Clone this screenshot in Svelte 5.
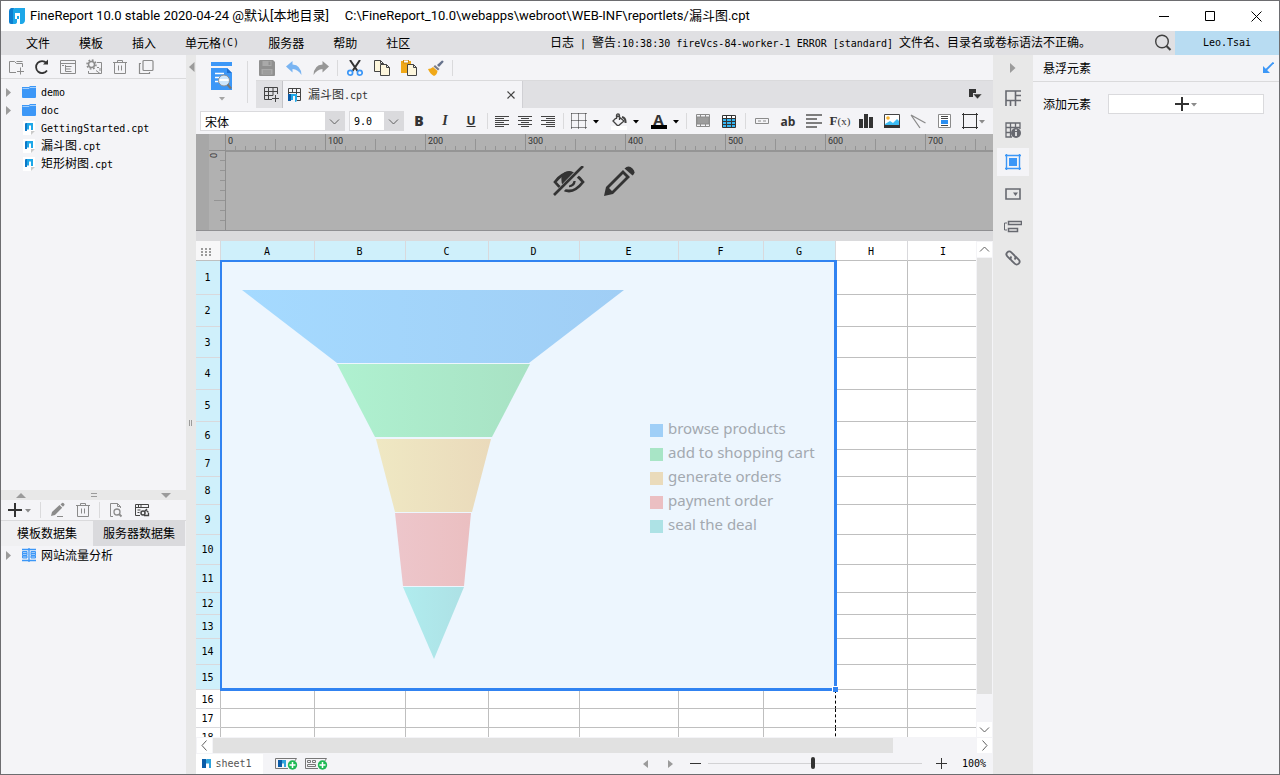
<script>
  const menus = [
    { t: '文件' }, { t: '模板' }, { t: '插入' }, { t: '单元格', k: '(C)' },
    { t: '服务器' }, { t: '帮助' }, { t: '社区' }
  ];
  const cols = [
    ['A', 94], ['B', 91], ['C', 83], ['D', 91], ['E', 99], ['F', 85], ['G', 72], ['H', 72], ['I', 72]
  ];
  const rows = [34, 32, 31, 32, 32, 28, 27, 28, 30, 30, 28, 22, 24, 26, 25, 19, 19, 19];
  const ruler = [0, 100, 200, 300, 400, 500, 600, 700];
  const tree = [
    { folder: true, en: 'demo' },
    { folder: true, en: 'doc' },
    { en: 'GettingStarted.cpt' },
    { zh: '漏斗图', en: '.cpt' },
    { zh: '矩形树图', en: '.cpt' }
  ];
  const slices = [
    { name: 'browse products', pts: '22,29 404,29 309,102 117,102', a: '#a5daff', b: '#a0cef5', key: '#a0cff7' },
    { name: 'add to shopping cart', pts: '117,103 310,103 272,176 155,176', a: '#aff1d0', b: '#a8e2c4', key: '#a8e5c6' },
    { name: 'generate orders', pts: '156,178 271,178 252,251 175,251', a: '#efe8c3', b: '#eadabb', key: '#eadbbb' },
    { name: 'payment order', pts: '175,252 251,252 244,325 183,325', a: '#edc6cb', b: '#ebbfc1', key: '#ebbfc2' },
    { name: 'seal the deal', pts: '183,326 244,326 214,398', a: '#b0ecee', b: '#ade1e5', key: '#ade2e5' }
  ];
  let zoom = $state(49);
  let font = $state('宋体');
  let size = $state('9.0');
</script>

{#snippet logo(s)}
  <svg width={s} height={s} viewBox="0 0 16 16" aria-hidden="true">
    <path d="M0 3q0-2 2-3h3v6H4v10H2q-2 0-2-2z" fill="#0d7fd0" />
    <path d="M4 2q0-2 2-2h10v12q0 3-3 4h-2V5H8v3h2v3H8v3q0 2-3 2H4z" fill="#1da7e8" />
    <path d="M6 5h4v3H8v3H6z" fill="#fff" />
  </svg>
{/snippet}

{#snippet caret(c)}
  <svg width="8" height="5" viewBox="0 0 8 5" aria-hidden="true"><path d="M1 1h6L4 4.500z" fill={c} /></svg>
{/snippet}

{#snippet trash()}
  <svg width="16" height="16" viewBox="0 0 16 16" fill="none" stroke="#8b8b8b" aria-hidden="true">
    <path d="M1 3.500h14M5.500 3V1.500h5V3M2.500 4v10.500h11V4M6.500 6.500v5M9.500 6.500v5" />
  </svg>
{/snippet}

{#snippet chevron(d)}
  <svg width="11" height="11" viewBox="0 0 11 11" fill="none" stroke="#606060" aria-hidden="true"><path {d} /></svg>
{/snippet}

<div class="window">
  <header class="title">
    {@render logo(16)}
    <span class="app-name">FineReport 10.0 stable 2020-04-24 @默认[本地目录]</span>
    <span class="path">C:\FineReport_10.0\webapps\webroot\WEB-INF\reportlets/漏斗图.cpt</span>
    <div class="win-buttons">
      <button aria-label="Minimize"><svg width="11" height="11" stroke="#000"><path d="M0 5.500h10" /></svg></button>
      <button aria-label="Maximize"><svg width="11" height="11" stroke="#000" fill="none"><path d="M.5 .5h9v9h-9z" /></svg></button>
      <button aria-label="Close"><svg width="11" height="11" stroke="#000"><path d="M.5 .5l10 10M10.500 .5l-10 10" /></svg></button>
    </div>
  </header>

  <nav class="menubar">
    <div class="menus">
      {#each menus as m}
        <button>{m.t}{#if m.k}<span class="mono">{m.k}</span>{/if}</button>
      {/each}
    </div>
    <p class="log">日志<span class="mono">&nbsp;|&nbsp;</span>警告<span class="mono">:10:38:30 fireVcs-84-worker-1 ERROR [standard]&nbsp;</span>文件名、目录名或卷标语法不正确。</p>
    <button class="search" aria-label="Search">
      <svg width="18" height="18" viewBox="0 0 18 18" fill="none" stroke="#404040"><circle cx="8" cy="7.500" r="6.300" stroke-width="1.400" /><path d="M12.500 12l4 4" stroke-width="2.200" /></svg>
    </button>
    <button class="user mono">Leo.Tsai</button>
  </nav>

  <div class="body">
    <aside class="left">
      <section class="files">
        <div class="bar">
          <button aria-label="New folder"><svg width="16" height="16" viewBox="0 0 16 16" fill="none" stroke="#8b8b8b"><path d="M8 13.500H1.500v-11h5l2 2h6V8M8.500 2.500h6M12.500 8.500v7M9 12.500h7" /></svg></button>
          <button aria-label="Refresh"><svg width="16" height="16" viewBox="0 0 16 16" fill="none" stroke="#333" stroke-width="1.800"><path d="M13 11.500A6 6 0 1 1 12.500 4" /><path d="M9 5.500h5V.5z" fill="#333" stroke="none" /></svg></button>
          <button aria-label="Open location"><svg width="16" height="16" viewBox="0 0 16 16" fill="none" stroke="#8b8b8b"><path d="M.5 1.500h15v13H.5zM0 4.500h16M5.500 6v6.500M5.500 7.500h6M5.500 10h5M5.500 12.500h6M2 6.500h2" /></svg></button>
          <button aria-label="Rename"><svg width="16" height="16" viewBox="0 0 16 16" fill="none" stroke="#8b8b8b"><circle cx="5.500" cy="5.500" r="3" stroke-width="1.500" /><circle cx="5.500" cy="5.500" r="4.500" stroke-width="1.500" stroke-dasharray="1.800 1.700" /><path d="M11 3.500h4.500v11H2.500V12M10 11.500l4 3M14 9v3M11 8.500h2" /></svg></button>
          <button aria-label="Delete">{@render trash()}</button>
          <button aria-label="Copy"><svg width="16" height="16" viewBox="0 0 16 16" fill="none" stroke="#8b8b8b" stroke-width="1.200"><rect x="5" y="1.500" width="10" height="10" rx="1" /><path d="M3 4.500H1.500v10h10V13" /></svg></button>
        </div>
        <ul class="tree">
          {#each tree as n}
            <li>
              <span class="twist">{#if n.folder}<svg width="6" height="9"><path d="M0 0l5 4.500L0 9z" fill="#9b9b9b" /></svg>{/if}</span>
              {#if n.folder}
                <svg class="node" width="16" height="14" viewBox="0 0 16 14"><path d="M1 2h7l1-1h6v11q0 1-1 1H2q-1 0-1-1z" fill="#3c97f7" /><path d="M1.500 3.500H8l1-1h6" stroke="#a4d0fc" fill="none" /></svg>
              {:else}
                <svg class="node" width="16" height="15" viewBox="0 0 16 15"><path d="M2 0h12v10l-4 4H2z" fill="#fff" /><path d="M10 14v-4h4z" fill="#c9c9c9" /><path d="M4 3q0-1 1-1h1v8H4z" fill="#0d78c8" /><path d="M6 2h6v7h-2V4.500H8v4H6z" fill="#1da7e8" /></svg>
              {/if}
              <span>{n.zh ?? ''}<span class="mono">{n.en}</span></span>
            </li>
          {/each}
        </ul>
      </section>

      <div class="hsplit">
        <svg width="10" height="5"><path d="M0 5L5 0l5 5z" fill="#9b9b9b" /></svg>
        <svg width="6" height="4" stroke="#9b9b9b"><path d="M0 .5h6M0 3.500h6" /></svg>
        <svg width="10" height="5"><path d="M0 0h10L5 5z" fill="#9b9b9b" /></svg>
      </div>

      <section class="datasets">
        <div class="bar">
          <button class="wide" aria-label="Add dataset"><svg width="14" height="14" stroke="#333" stroke-width="2"><path d="M7 0v14M0 7h14" /></svg>{@render caret('#8b8b8b')}</button>
          <i class="sep"></i>
          <button aria-label="Edit"><svg width="16" height="16" viewBox="0 0 16 16"><path d="M2 14l1-4 7.500-7 2.700 2.700L6 13zM11.500 2.500L13 1q1-.7 2 .5t.3 1.800L14 4.800z" fill="#8b8b8b" /><path d="M8 14.500h6" stroke="#8b8b8b" /></svg></button>
          <button aria-label="Delete dataset">{@render trash()}</button>
          <i class="sep"></i>
          <button aria-label="Preview dataset"><svg width="16" height="16" viewBox="0 0 16 16" fill="none" stroke="#8b8b8b"><path d="M5 14.500H2.500v-13h7l3 3V6M9.500 1.500v3h3" /><circle cx="9" cy="10" r="3" stroke-width="1.300" /><path d="M11 12l2.500 2.500" stroke-width="1.800" /></svg></button>
          <button aria-label="Connection settings"><svg width="16" height="16" viewBox="0 0 16 16" fill="none" stroke="#444"><path d="M6 13.500H1.500v-11h13V6M1 5.500h14M4.500 3v2M7 3v2M3.500 8h3M3.500 10.500h2" /><circle cx="9" cy="11" r="2" stroke-width="1.500" /><path d="M10.500 9.500L13 7M12 8l2.500 2.500M10 13.500h4.500V11" stroke-width="1.300" /></svg></button>
        </div>
        <div class="tabs">
          <button>模板数据集</button>
          <button class="on">服务器数据集</button>
        </div>
        <ul class="tree">
          <li>
            <span class="twist"><svg width="6" height="9"><path d="M0 0l5 4.500L0 9z" fill="#9b9b9b" /></svg></span>
            <svg class="node" width="16" height="14" viewBox="0 0 16 14" fill="none" stroke="#3c97f7"><path d="M1 1.500h14M1 12.500h14M8 0v14" stroke-width="1.300" /><path d="M1.500 3.500h4.500v2H1.500zM1.500 5.500h4.500v2H1.500zM1.500 8h4.500v2H1.500zM10 3.500h4.500v2H10zM10 5.500h4.500v2H10zM10 8h4.500v2H10z" fill="#9fcbf9" /></svg>
            <span>网站流量分析</span>
          </li>
        </ul>
      </section>
    </aside>

    <div class="vsplit">
      <svg width="6" height="10"><path d="M5.500 0v10L0 5z" fill="#9b9b9b" /></svg>
      <span class="grip"></span>
    </div>

    <main class="main">
      <div class="top">
        <button class="preview" aria-label="Preview">
          <svg width="22" height="30" viewBox="0 0 22 30"><path d="M0 1h21v4H0z" fill="#3c97f7" /><path d="M0 7h16l5 5v17H0z" fill="#3c97f7" /><path d="M16 7v5h5z" fill="#1f6fd0" /><path d="M4 12.500h9M4 16.500h5M4 20.500h4" stroke="#fff" stroke-width="1.600" /><circle cx="13" cy="19.500" r="5.500" fill="#cfe6fb" stroke="#8f8f8f" /><path d="M8.500 18h9v2h-9z" fill="#fff" /><path d="M16.500 23.500l3.500 4" stroke="#777" stroke-width="2.200" /></svg>
          {@render caret('#a5a5a5')}
        </button>
        <div class="top-right">
          <div class="actions">
            <button aria-label="Save"><svg width="16" height="16" viewBox="0 0 16 16"><path d="M1 0h13l2 2v13q0 1-1 1H1q-1 0-1-1V1q0-1 1-1z" fill="#909090" /><path d="M3.500 1h9v5h-9zM2.500 9h11v5.500h-11z" fill="#a9a9a9" /><path d="M9.500 1.500h2v3.500h-2z" fill="#909090" /><path d="M4 11h8M4 13h8" stroke="#909090" /></svg></button>
            <button aria-label="Undo"><svg width="16" height="16" viewBox="0 0 16 16"><path d="M0 6.500L6.500 1v3.500Q15 5 15.500 15 12 9.500 6.500 9v3.500z" fill="#79b4f2" /></svg></button>
            <button aria-label="Redo"><svg width="16" height="16" viewBox="0 0 16 16"><path d="M16 6.500L9.500 1v3.500Q1 5 .5 15 4 9.500 9.500 9v3.500z" fill="#979797" /></svg></button>
            <i class="sep"></i>
            <button aria-label="Cut"><svg width="16" height="16" viewBox="0 0 16 16" fill="none"><path d="M3 0l7.500 11M13 0L5.500 11" stroke="#333" stroke-width="2" /><circle cx="3.200" cy="12.700" r="2.400" stroke="#3c97f7" stroke-width="1.700" /><circle cx="12.800" cy="12.700" r="2.400" stroke="#3c97f7" stroke-width="1.700" /></svg></button>
            <button aria-label="Copy cells"><svg width="16" height="16" viewBox="0 0 16 16" stroke="#444"><path d="M.5 .5h6l3 3v8h-9zM6.500 .5v3h3" fill="#fdf6dd" /><path d="M6.500 4.500h6l3 3v8h-9zM12.500 4.500v3h3" fill="#fdf6dd" /></svg></button>
            <button aria-label="Paste"><svg width="16" height="16" viewBox="0 0 16 16"><path d="M0 1h10v12H0z" fill="#f0a818" /><path d="M2.500 0h5v3h-5z" fill="#fff" stroke="#d08c10" /><path d="M6.500 4.500h6l3 3v8h-9zM12.500 4.500v3h3" fill="#fdf6dd" stroke="#444" /></svg></button>
            <button aria-label="Format painter"><svg width="16" height="16" viewBox="0 0 16 16"><path d="M14 .5q2 0 1.500 1.500L11 7 9 5z" fill="#66728c" /><path d="M7 5l4.500 4L10 10.500 5.500 6.500z" fill="#7e7e86" /><path d="M5 7l4.500 4Q9 15 6 16 2 14 0 9q3 0 5-2z" fill="#f0a818" /></svg></button>
            <i class="sep"></i>
          </div>
          <div class="doctabs">
            <button class="newtab" aria-label="New template"><svg width="15" height="15" viewBox="0 0 15 15" fill="none" stroke="#444"><path d="M8 12.500H.5V.5h13V7M.5 4.500h13M.5 8.500H9M4.500 .5v12M9 .5v8M11.500 8v7M8 11.500h7" /></svg></button>
            <div class="doctab">
              <svg width="14" height="14" viewBox="0 0 14 14" fill="none" stroke="#444"><path d="M.5 6V.5h12v12H9M0 4.500h13M4.500 0v5M8.500 0v12M9 8.500h4" /><path d="M0 6h3v7H0z" fill="#0b5ca8" stroke="none" /><path d="M3 6h6v6q0 2-2 2V8H5v4H3z" fill="#1da7e8" stroke="none" /></svg>
              <span>漏斗图<span class="mono">.cpt</span></span>
              <button aria-label="Close tab"><svg width="8" height="8" stroke="#444" stroke-width="1.200"><path d="M.5 .5l7 7M7.500 .5l-7 7" /></svg></button>
            </div>
            <button class="tablist" aria-label="All templates"><svg width="13" height="11"><path d="M0 0h7v4H4v4H0z" fill="#333" /><path d="M4 5h9L8.500 10z" fill="#333" stroke="#e0e0e3" stroke-width=".5" /></svg></button>
          </div>
        </div>
      </div>

      <div class="format">
        <div class="combo family">
          <select aria-label="Font" bind:value={font}><option>宋体</option><option>黑体</option></select>
          <span>{@render chevron('M1 3.500l4.500 4.500L10 3.500')}</span>
        </div>
        <div class="combo size">
          <select class="mono" aria-label="Font size" bind:value={size}><option>9.0</option><option>10.0</option></select>
          <span>{@render chevron('M1 3.500l4.500 4.500L10 3.500')}</span>
        </div>
        <div class="group biu">
          <button aria-label="Bold"><b>B</b></button>
          <button aria-label="Italic"><em>I</em></button>
          <button aria-label="Underline"><u>U</u></button>
        </div>
        <i class="sep"></i>
        <div class="group aligns">
          <button aria-label="Align left"><svg width="15" height="13" stroke="#444"><path d="M0 1.500h14M0 3.500h9M0 5.500h14M0 7.500h9M0 9.500h14M0 11.500h9" /></svg></button>
          <button aria-label="Align center"><svg width="15" height="13" stroke="#444"><path d="M0 1.500h14M3 3.500h8M0 5.500h14M3 7.500h8M0 9.500h14M3 11.500h8" /></svg></button>
          <button aria-label="Align right"><svg width="15" height="13" stroke="#444"><path d="M0 1.500h14M5 3.500h9M0 5.500h14M5 7.500h9M0 9.500h14M5 11.500h9" /></svg></button>
        </div>
        <i class="sep"></i>
        <div class="group splits">
          <button aria-label="Borders"><svg width="16" height="16" fill="none" stroke="#222" stroke-dasharray="1 1"><path d="M.5 .5h15M.5 14.500h15M.5 7.500h15M.5 .5v15M7.500 .5v15M14.500 .5v15" /></svg>{@render caret('#000')}</button>
          <button aria-label="Fill color"><svg width="16" height="17" viewBox="0 0 16 17" fill="none" stroke="#444" stroke-width="1.300"><path d="M7 3l6 5-6 5-5-5zM5.500 6V2.500q0-1.500 1.500-1.500t1.500 1.500V7" /><path d="M11 4q4 1 3.500 6" stroke-width="2" /><path d="M0 13h16v4H0z" fill="#fff" stroke="none" /></svg>{@render caret('#000')}</button>
          <button aria-label="Font color"><span class="fc">A</span>{@render caret('#000')}</button>
        </div>
        <i class="sep"></i>
        <div class="group">
          <button aria-label="Merge cells"><svg width="14" height="14" viewBox="0 0 14 14" fill="none" stroke="#8b8b8b"><path d="M.5 .5h13v12H.5zM4.500 0v3M9.500 0v3M4.500 10v3M9.500 10v3" /><path d="M1 3h12v7H1z" fill="#9c9c9c" /></svg></button>
          <button aria-label="Split cells"><svg width="14" height="13" viewBox="0 0 14 13" stroke="#333"><path d="M.5 .5h13v12H.5z" fill="#fff" /><path d="M1 4h12v8H1z" fill="#35b5f2" stroke="none" /><path d="M.5 3.500h13M.5 6.500h13M.5 9.500h13M4.500 0v13M9.500 0v13" /></svg></button>
        </div>
        <i class="sep"></i>
        <div class="group">
          <button aria-label="Text field"><svg width="14" height="6" fill="none" stroke="#8b8b8b"><path d="M.5 .5h13v5H.5zM3 3h3M8 3h3" /></svg></button>
          <button class="ab">ab</button>
          <button aria-label="Rich text"><svg width="16" height="14" stroke="#555" stroke-width="1.500"><path d="M0 1h16M0 5h11M0 9h16M0 13h11" /></svg></button>
          <button class="fx">F<small>(x)</small></button>
          <button aria-label="Chart"><svg width="14" height="14" fill="#333"><path d="M0 5h4v9H0zM5 0h4v14H5zM10 3h4v11h-4z" /></svg></button>
          <button aria-label="Image"><svg width="16" height="14"><path d="M.5 .5h15v13H.5z" fill="#fff" stroke="#444" /><path d="M1 10l5-3 3 2 4-4 2 2v4H1z" fill="#3dbdf5" /><path d="M0 11h16v3H0z" fill="#333" /><circle cx="4" cy="4" r="1.800" fill="#f8b530" /></svg></button>
          <button aria-label="Slope line"><svg width="16" height="15" fill="none" stroke="#8b8b8b" stroke-width="1.300"><path d="M1 1l9 13M1 1l14.500 8" /></svg></button>
          <button aria-label="Sub report"><svg width="13" height="14" viewBox="0 0 13 14"><path d="M.5 .5h12v13H.5z" fill="#fff" stroke="#8b8b8b" /><path d="M3 2.500h7M3 4.500h7M3 11.500h7" stroke="#444" /><path d="M3 6h7v4H3z" fill="#2b8ef0" /></svg></button>
          <button class="float" aria-label="Float element"><svg width="16" height="16" fill="none" stroke="#333"><path d="M1.500 0v16M14.500 0v16M0 1.500h16M0 14.500h16" /></svg>{@render caret('#8b8b8b')}</button>
        </div>
      </div>

      <div class="canvas">
        <div class="gutter"></div>
        <div class="vruler"><span>0</span></div>
        <div class="area">
          <div class="ruler">
            {#each ruler as r}<span>{r}</span>{/each}
          </div>
          <div class="para">
            <button aria-label="Hide parameter panel"><svg width="32" height="30" viewBox="0 0 32 30" fill="none" stroke="#333"><path d="M2 16Q9 7 16 7t14 9q-7 9-14 9T2 16z" stroke-width="2.800" /><path d="M8.500 15a8 8 0 0 1 14-7L12 21q-3.500-2-3.500-6z" fill="#333" stroke="none" /><path d="M16 20q5 0 5.500-5" stroke-width="2.500" /><path d="M1 31L30 1" stroke="#b1b1b1" stroke-width="6" /><path d="M1 29L30 0" stroke-width="2.600" /></svg></button>
            <button aria-label="Edit parameter panel"><svg width="32" height="30" viewBox="0 0 32 30" fill="#333"><path fill-rule="evenodd" d="M1 30l2-9L20 4l7 7-17 17zM20 8L6 22l3 3L23 11z" /><path d="M21.500 2.500q4-4 8 0t0 7z" /></svg></button>
          </div>
        </div>
      </div>
      <div class="divider"></div>

      <div class="sheet">
        <div class="grid">
          <table>
            <colgroup>
              <col style="width:25px" />
              {#each cols as c}<col style="width:{c[1]}px" />{/each}
            </colgroup>
            <thead>
              <tr>
                <th class="corner"><svg width="11" height="9" fill="#9b9b9b"><path d="M0 0h2v2H0zM4 0h2v2H4zM8 0h2v2H8zM0 3h2v2H0zM4 3h2v2H4zM8 3h2v2H8zM0 6h2v2H0zM4 6h2v2H4zM8 6h2v2H8z" /></svg></th>
                {#each cols as c, i}<th class:sel={i < 7}>{c[0]}</th>{/each}
              </tr>
            </thead>
            <tbody>
              {#each rows as h, r}
                <tr style="height:{h}px">
                  <th class:sel={r < 15}>{r + 1}</th>
                  {#each cols as c, i}<td class:page={i === 6}></td>{/each}
                </tr>
              {/each}
            </tbody>
          </table>
          <figure class="chart">
            <svg class="funnel" width="426" height="400" viewBox="0 0 426 400" role="img" aria-label="Funnel">
              <defs>
                {#each slices as s, i}
                  <linearGradient id="g{i}"><stop offset="0" stop-color={s.a} /><stop offset="1" stop-color={s.b} /></linearGradient>
                {/each}
              </defs>
              {#each slices as s, i}<polygon points={s.pts} fill="url(#g{i})" />{/each}
            </svg>
            <ul class="legend">
              {#each slices as s}<li><i style="background:{s.key}"></i>{s.name}</li>{/each}
            </ul>
            <span class="handle"></span>
          </figure>
        </div>
        <div class="vscroll">
          <button aria-label="Scroll up">{@render chevron('M1 7.500L5.500 3 10 7.500')}</button>
          <div class="track"><span></span></div>
          <button aria-label="Scroll down">{@render chevron('M1 3.500l4.500 4.500L10 3.500')}</button>
        </div>
      </div>
      <div class="hscroll">
        <button aria-label="Scroll left">{@render chevron('M7.500 .5L3 5.500l4.500 5')}</button>
        <div class="track"><span></span></div>
        <button aria-label="Scroll right">{@render chevron('M3.500 .5L8 5.500l-4.500 5')}</button>
      </div>

      <footer class="status">
        <button class="sheettab"><svg width="9" height="9"><path d="M0 0h4v9H0z" fill="#0b5ca8" /><path d="M4 1q0-1 1-1h4v9H7V4.500H4z" fill="#2fa3dc" /></svg><span class="mono">sheet1</span></button>
        <button class="add" aria-label="Add sheet"><svg width="23" height="13" viewBox="0 0 23 13"><path d="M13 11.500H.5v-10h21l-2 3" fill="none" stroke="#777" /><path d="M3 3h4v7H3z" fill="#0b5ca8" /><path d="M7 3h4v7H9V6.500H7z" fill="#2fa3dc" /><circle cx="17.500" cy="8" r="4.700" fill="#1fb955" /><path d="M17.500 5v6M14.500 8h6" stroke="#fff" stroke-width="1.500" /></svg></button>
        <button class="add" aria-label="Add aggregate sheet"><svg width="23" height="13" viewBox="0 0 23 13"><path d="M13 11.500H.5v-10h21l-2 3M2.500 3.500h3v2h-3zM7.500 3.500h3v2h-3zM2.500 7.500h8v2h-8z" fill="none" stroke="#777" /><circle cx="17.500" cy="8" r="4.700" fill="#1fb955" /><path d="M17.500 5v6M14.500 8h6" stroke="#fff" stroke-width="1.500" /></svg></button>
        <div class="zoom">
          <button aria-label="Previous sheet"><svg width="5" height="8"><path d="M5 0v8L0 4z" fill="#9b9b9b" /></svg></button>
          <button aria-label="Next sheet"><svg width="5" height="8"><path d="M0 0v8l5-4z" fill="#9b9b9b" /></svg></button>
          <button aria-label="Zoom out"><svg width="11" height="11" stroke="#333"><path d="M0 5.500h11" /></svg></button>
          <input type="range" min="0" max="100" bind:value={zoom} aria-label="Zoom" />
          <button aria-label="Zoom in"><svg width="11" height="11" stroke="#333"><path d="M0 5.500h11M5.500 0v11" /></svg></button>
          <span class="mono">100%</span>
        </div>
      </footer>
    </main>

    <nav class="strip">
      <button aria-label="Collapse"><svg width="6" height="10"><path d="M0 0l5.500 5L0 10z" fill="#9b9b9b" /></svg></button>
      <button aria-label="Cell element"><svg width="16" height="16" viewBox="0 0 16 16" fill="none" stroke="#676970" stroke-width="1.600"><path d="M16 1H1v15M1 10.500h15M10.500 1v15M10.500 5.500H16M5.500 10.500V16" /></svg></button>
      <button aria-label="Cell attributes"><svg width="16" height="16" viewBox="0 0 16 16" fill="none" stroke="#676970" stroke-width="1.300"><path d="M7 15H1V1h14v6M1 5.500h14M1 10.500h5M5.500 1v14M10.500 1v5" /><circle cx="11" cy="11" r="5" fill="#676970" stroke="none" /><path d="M11 7.500v1.500M11 10v4" stroke="#fff" stroke-width="1.500" /></svg></button>
      <button class="on" aria-label="Float element panel"><svg width="16" height="16" viewBox="0 0 16 16" fill="none" stroke="#3c97f7" stroke-width="1.400"><path d="M1.500 0v16M14.500 0v16M0 1.500h16M0 14.500h16" /><path d="M4 4h8v8H4z" fill="#3c97f7" stroke="none" /></svg></button>
      <button aria-label="Widget settings"><svg width="16" height="12" fill="none" stroke="#676970" stroke-width="1.600"><path d="M1 1h14v10H1z" /><path d="M8 4.500h5L10.500 8z" fill="#676970" stroke="none" /></svg></button>
      <button aria-label="Condition attributes"><svg width="18" height="13" fill="none" stroke="#676970" stroke-width="1.500"><path d="M4.500 1.500h13v3h-13zM4.500 8.500h9v3h-9z" /><path d="M3 3H.5v7H3" stroke-width="1" /></svg></button>
      <button aria-label="Hyperlinks"><svg width="16" height="16" viewBox="0 0 16 16" fill="none" stroke="#676970" stroke-width="1.800"><path d="M5.500 9.500L2.300 6.300a2.700 2.700 0 0 1 4-4l3.200 3.200a2.700 2.700 0 0 1 0 4" /><path d="M10.500 6.500l3.200 3.200a2.700 2.700 0 0 1-4 4L6.500 10.500a2.700 2.700 0 0 1 0-4" /></svg></button>
    </nav>

    <aside class="right">
      <header><h2>悬浮元素</h2><button aria-label="Pop out"><svg width="12" height="12" fill="none" stroke="#3c97f7" stroke-width="1.800"><path d="M11.500 .5L3 9" /><path d="M1 4v7h7z" fill="#3c97f7" stroke="none" /></svg></button></header>
      <div class="row">
        <label for="add">添加元素</label>
        <button id="add"><svg width="14" height="14" stroke="#333" stroke-width="2"><path d="M7 0v14M0 7h14" /></svg>{@render caret('#8b8b8b')}</button>
      </div>
    </aside>
  </div>
</div>

<style>
  :global(body) { margin: 0; }
  .window {
    box-sizing: border-box; display: flex; flex-direction: column; height: 100vh;
    border: 1px solid #6d6d70; background: #f4f4f7; color: #000; overflow: hidden;
    font: 12px/18px "Noto Sans CJK SC", sans-serif;
  }
  .window :global(*) { box-sizing: border-box; }
  button { display: flex; align-items: center; justify-content: center; margin: 0; padding: 0; border: 0; background: none; color: inherit; font: inherit; white-space: nowrap; }
  svg { display: block; flex: none; }
  ul { margin: 0; padding: 0; list-style: none; }
  .mono { font-family: "DejaVu Sans Mono", monospace; font-size: 10px; }
  .sep { flex: none; width: 1px; height: 16px; margin: 0 3px; background: #dadadc; }

  .title { display: flex; align-items: center; flex: none; height: 30px; padding-left: 8px; background: #fff; font-family: Roboto, "Noto Sans CJK SC", sans-serif; font-size: 13px; white-space: nowrap; }
  .app-name { margin-left: 5px; }
  .path { margin-left: 16px; }
  .win-buttons { display: flex; margin-left: auto; }
  .win-buttons button { width: 46px; height: 30px; }

  .menubar { display: flex; align-items: center; flex: none; height: 24px; background: #e0e0e3; }
  .menus { display: flex; gap: 29px; padding-left: 25px; }
  .log { margin: 0 60px 0 auto; white-space: nowrap; }
  .search { width: 24px; height: 24px; }
  .user { width: 104px; height: 24px; background: #b8dcf2; }

  .body { display: flex; flex: 1; min-height: 0; }
  .left { display: flex; flex-direction: column; flex: none; width: 185px; }
  .files { flex: 435; min-height: 0; }
  .datasets { flex: 274; min-height: 0; }
  .bar { display: flex; align-items: center; height: 24px; padding-left: 2px; border-bottom: 1px solid #dadadc; }
  .bar button { width: 26px; height: 22px; }
  .bar .wide { width: 34px; gap: 2px; }
  .datasets .bar { height: 21px; }
  .tree { padding: 4px 0 0 5px; }
  .tree li { display: flex; align-items: center; height: 18px; white-space: nowrap; }
  .twist { width: 15px; }
  .node { margin-right: 4px; }
  .hsplit { display: flex; align-items: center; justify-content: space-between; flex: none; height: 10px; padding: 0 15px; background: #e8e8e8; }
  .tabs { display: flex; height: 25px; padding-right: 1px; background: #f0f0f2; }
  .tabs button { flex: 1; padding-bottom: 2px; }
  .tabs .on { background: #dadadd; }
  .datasets .tree { padding-top: 0; }

  .vsplit { display: flex; flex-direction: column; align-items: flex-start; flex: none; width: 10px; padding: 7px 0 0 3px; background: #e8e8e8; }
  .grip { width: 3px; height: 6px; margin: auto 0; border: solid #9b9b9b; border-width: 0 1px; }

  .main { display: flex; flex-direction: column; flex: 1; min-width: 0; }
  .top { display: flex; flex: none; height: 53px; }
  .preview { flex-direction: column; justify-content: flex-start; gap: 5px; width: 52px; height: 42px; margin: 6px 8px 0 0; border-right: 1px solid #dadadc; }
  .top-right { flex: 1; min-width: 0; }
  .actions { display: flex; align-items: center; height: 25px; margin-left: -3px; }
  .actions button { width: 27px; height: 24px; }
  .doctabs { display: flex; height: 28px; background: #e0e0e3; border-top: 1px solid #dadadc; }
  .newtab { width: 27px; padding-left: 4px; border-right: 1px solid #c4c4c8; }
  .doctab { display: flex; align-items: center; gap: 6px; width: 240px; padding: 0 7px 0 5px; background: #f4f4f7; border-right: 1px solid #d0d0d4; color: #333; }
  .doctab button { margin-left: auto; }
  .tablist { margin: 0 11px 0 auto; }

  .format { display: flex; align-items: center; flex: none; height: 26px; padding-left: 4px; }
  .format button { width: 26px; height: 22px; }
  .combo { display: flex; height: 20px; border: 1px solid #dadadd; background: #fff; }
  .combo select { flex: 1; min-width: 0; margin: 0; padding: 0 0 0 4px; border: 0; background: #fff; appearance: none; color: #000; font-size: 12px; font-family: "Noto Sans CJK SC", sans-serif; }
  .combo select.mono { font: 10px "DejaVu Sans Mono", monospace; }
  .combo span { display: flex; align-items: center; justify-content: center; width: 19px; background: #dadadd; }
  .family { width: 145px; margin-right: 4px; }
  .size { width: 55px; margin-right: 2px; }
  .group { display: flex; align-items: center; }
  .biu { font: 14px/16px "Open Sans", sans-serif; color: #333; }
  .biu b { font-weight: 800; }
  .biu em { font: italic bold 14px "Liberation Serif", serif; }
  .biu u { font-weight: 700; font-size: 12px; }
  .aligns button { width: 23px; }
  .splits { gap: 4px; }
  .splits button { width: 36px; gap: 5px; }
  .fc { width: 16px; height: 16px; border-bottom: 4px solid #000; color: #333; font: bold 15px/12px "Open Sans", sans-serif; text-align: center; }
  .ab { color: #333; font: bold 12px "Open Sans", sans-serif; }
  .fx { color: #333; font: bold 13px "Liberation Serif", serif; }
  .fx small { font-size: 11px; font-weight: 400; }
  .format .float { width: 34px; }

  .canvas { display: flex; flex: none; height: 97px; background: #b1b1b1; border-bottom: 1px solid #8f8f92; }
  .gutter { width: 13px; background: #a7a7a7; }
  .vruler { width: 16px; margin-top: 16px; padding-left: 1px; border-top: 1px solid #8f8f8f; background: repeating-linear-gradient(#0000 0 9px, #949494 9px 10px) right 0 top 0 / 5px 100% no-repeat, linear-gradient(#949494, #949494) right 0 top 49px / 11px 1px no-repeat; color: #333; font: 9px/9px Roboto, sans-serif; }
  .vruler span { display: block; width: 9px; height: 9px; text-align: center; transform: rotate(-90deg); }
  .area { flex: 1; min-width: 0; border-left: 1px solid #8f8f8f; overflow: hidden; }
  .ruler { display: flex; height: 18px; border-bottom: 2px solid #959595; }
  .ruler span { flex: none; width: 100px; padding: 2px 0 0 2px; border-left: 1px solid #8f8f8f; background: repeating-linear-gradient(90deg, #0000 0 9px, #949494 9px 10px) 0 12px / 99px 4px no-repeat, linear-gradient(#949494, #949494) 49px 5px / 1px 11px no-repeat; color: #333; font: 9px/10px Roboto, sans-serif; }
  .ruler span:first-child { width: 99px; border-left: 0; }
  .ruler span:last-child { flex: 1; min-width: 0; }
  .para { display: flex; justify-content: center; gap: 18px; padding: 14px 31px 0 0; }
  .divider { flex: none; height: 10px; background: #dadadc; }

  .sheet { display: flex; flex: 1; min-height: 0; }
  .grid { position: relative; flex: 1; min-width: 0; overflow: hidden; background: #fff; }
  table { width: 0; border-collapse: separate; border-spacing: 0; table-layout: fixed; }
  th, td { padding: 0; border: solid #bfbfbf; border-width: 0 1px 1px 0; }
  th { padding: 1px 1px 0 0; border-color: #d9d9dc; background: #fff; font: 10px/10px "DejaVu Sans Mono", monospace; }
  tbody th { border-right-color: #bfbfbf; }
  thead th { height: 20px; padding-top: 3px; border-bottom-color: #bfbfbf; }
  th.sel { background: #cff0fb; border-color: #d9d9dc; }
  .corner { background: #f7f7f8; }
  .corner svg { margin: 0 auto 0 5px; }
  .page { border-right: 1px dashed #000; }
  .chart { position: absolute; left: 24px; top: 19px; display: flex; width: 617px; height: 431px; margin: 0; border: solid #3183f1; border-width: 2px 3px 3px 2px; background: #edf6fe; }
  .funnel { margin: -1px 0 0 -2px; }
  .legend { padding: 154px 0 0 4px; color: #a3a9b0; font: 15px/24px "Noto Sans", sans-serif; white-space: nowrap; }
  .legend li { display: flex; align-items: center; gap: 5px; }
  .legend i { width: 13px; height: 13px; margin-top: 4px; }
  .handle { position: absolute; right: -4px; bottom: -4px; width: 6px; height: 6px; border: solid #fff; border-width: 1px 0 0 1px; background: #3183f1; }

  .vscroll { display: flex; flex-direction: column; flex: none; width: 17px; padding: 1px 1px 0; }
  .vscroll button, .hscroll button { flex: none; width: 15px; height: 15px; background: #fff; }
  .vscroll .track { flex: 1; padding-top: 1px; }
  .vscroll .track span { display: block; height: 94%; background: #e1e1e1; }
  .hscroll { display: flex; flex: none; height: 16px; padding: 1px 1px 0; }
  .hscroll .track { flex: 1; padding-left: 1px; }
  .hscroll .track span { display: block; width: 89%; height: 15px; background: #e1e1e1; }

  .status { display: flex; align-items: center; flex: none; height: 21px; }
  .sheettab { gap: 4px; width: 67px; height: 20px; padding-right: 5px; background: #fff; color: #555; }
  .add { margin-left: 12px; }
  .add + .add { margin-left: 7px; }
  .zoom { display: flex; align-items: center; margin-left: auto; padding-right: 7px; }
  .zoom button { width: 25px; height: 20px; }
  .zoom .mono { margin-left: 8px; }
  .zoom input { width: 214px; height: 14px; margin: 0 7px 0 0; background: none; appearance: none; }
  .zoom input::-webkit-slider-runnable-track { height: 1px; background: #d2d2d4; }
  .zoom input::-webkit-slider-thumb { width: 4px; height: 12px; margin-top: -6px; border-radius: 2px; background: #333; appearance: none; }

  .strip { display: flex; flex-direction: column; align-items: center; flex: none; gap: 4px; width: 40px; background: #e8e8e8; }
  .strip button { width: 32px; height: 28px; }
  .strip button:first-child { height: 25px; }
  .strip .on { background: #f4f4f7; }

  .right { flex: none; width: 246px; }
  .right header { display: flex; align-items: center; justify-content: space-between; height: 27px; padding: 0 5px 0 10px; border-bottom: 1px solid #dadadc; }
  h2 { margin: 0; font-size: 12px; font-weight: 400; }
  .row { display: flex; align-items: center; padding: 12px 15px 0 10px; }
  .row button { flex: 1; gap: 1px; height: 20px; margin-left: 17px; border: 1px solid #dadadd; background: #fff; }
</style>
